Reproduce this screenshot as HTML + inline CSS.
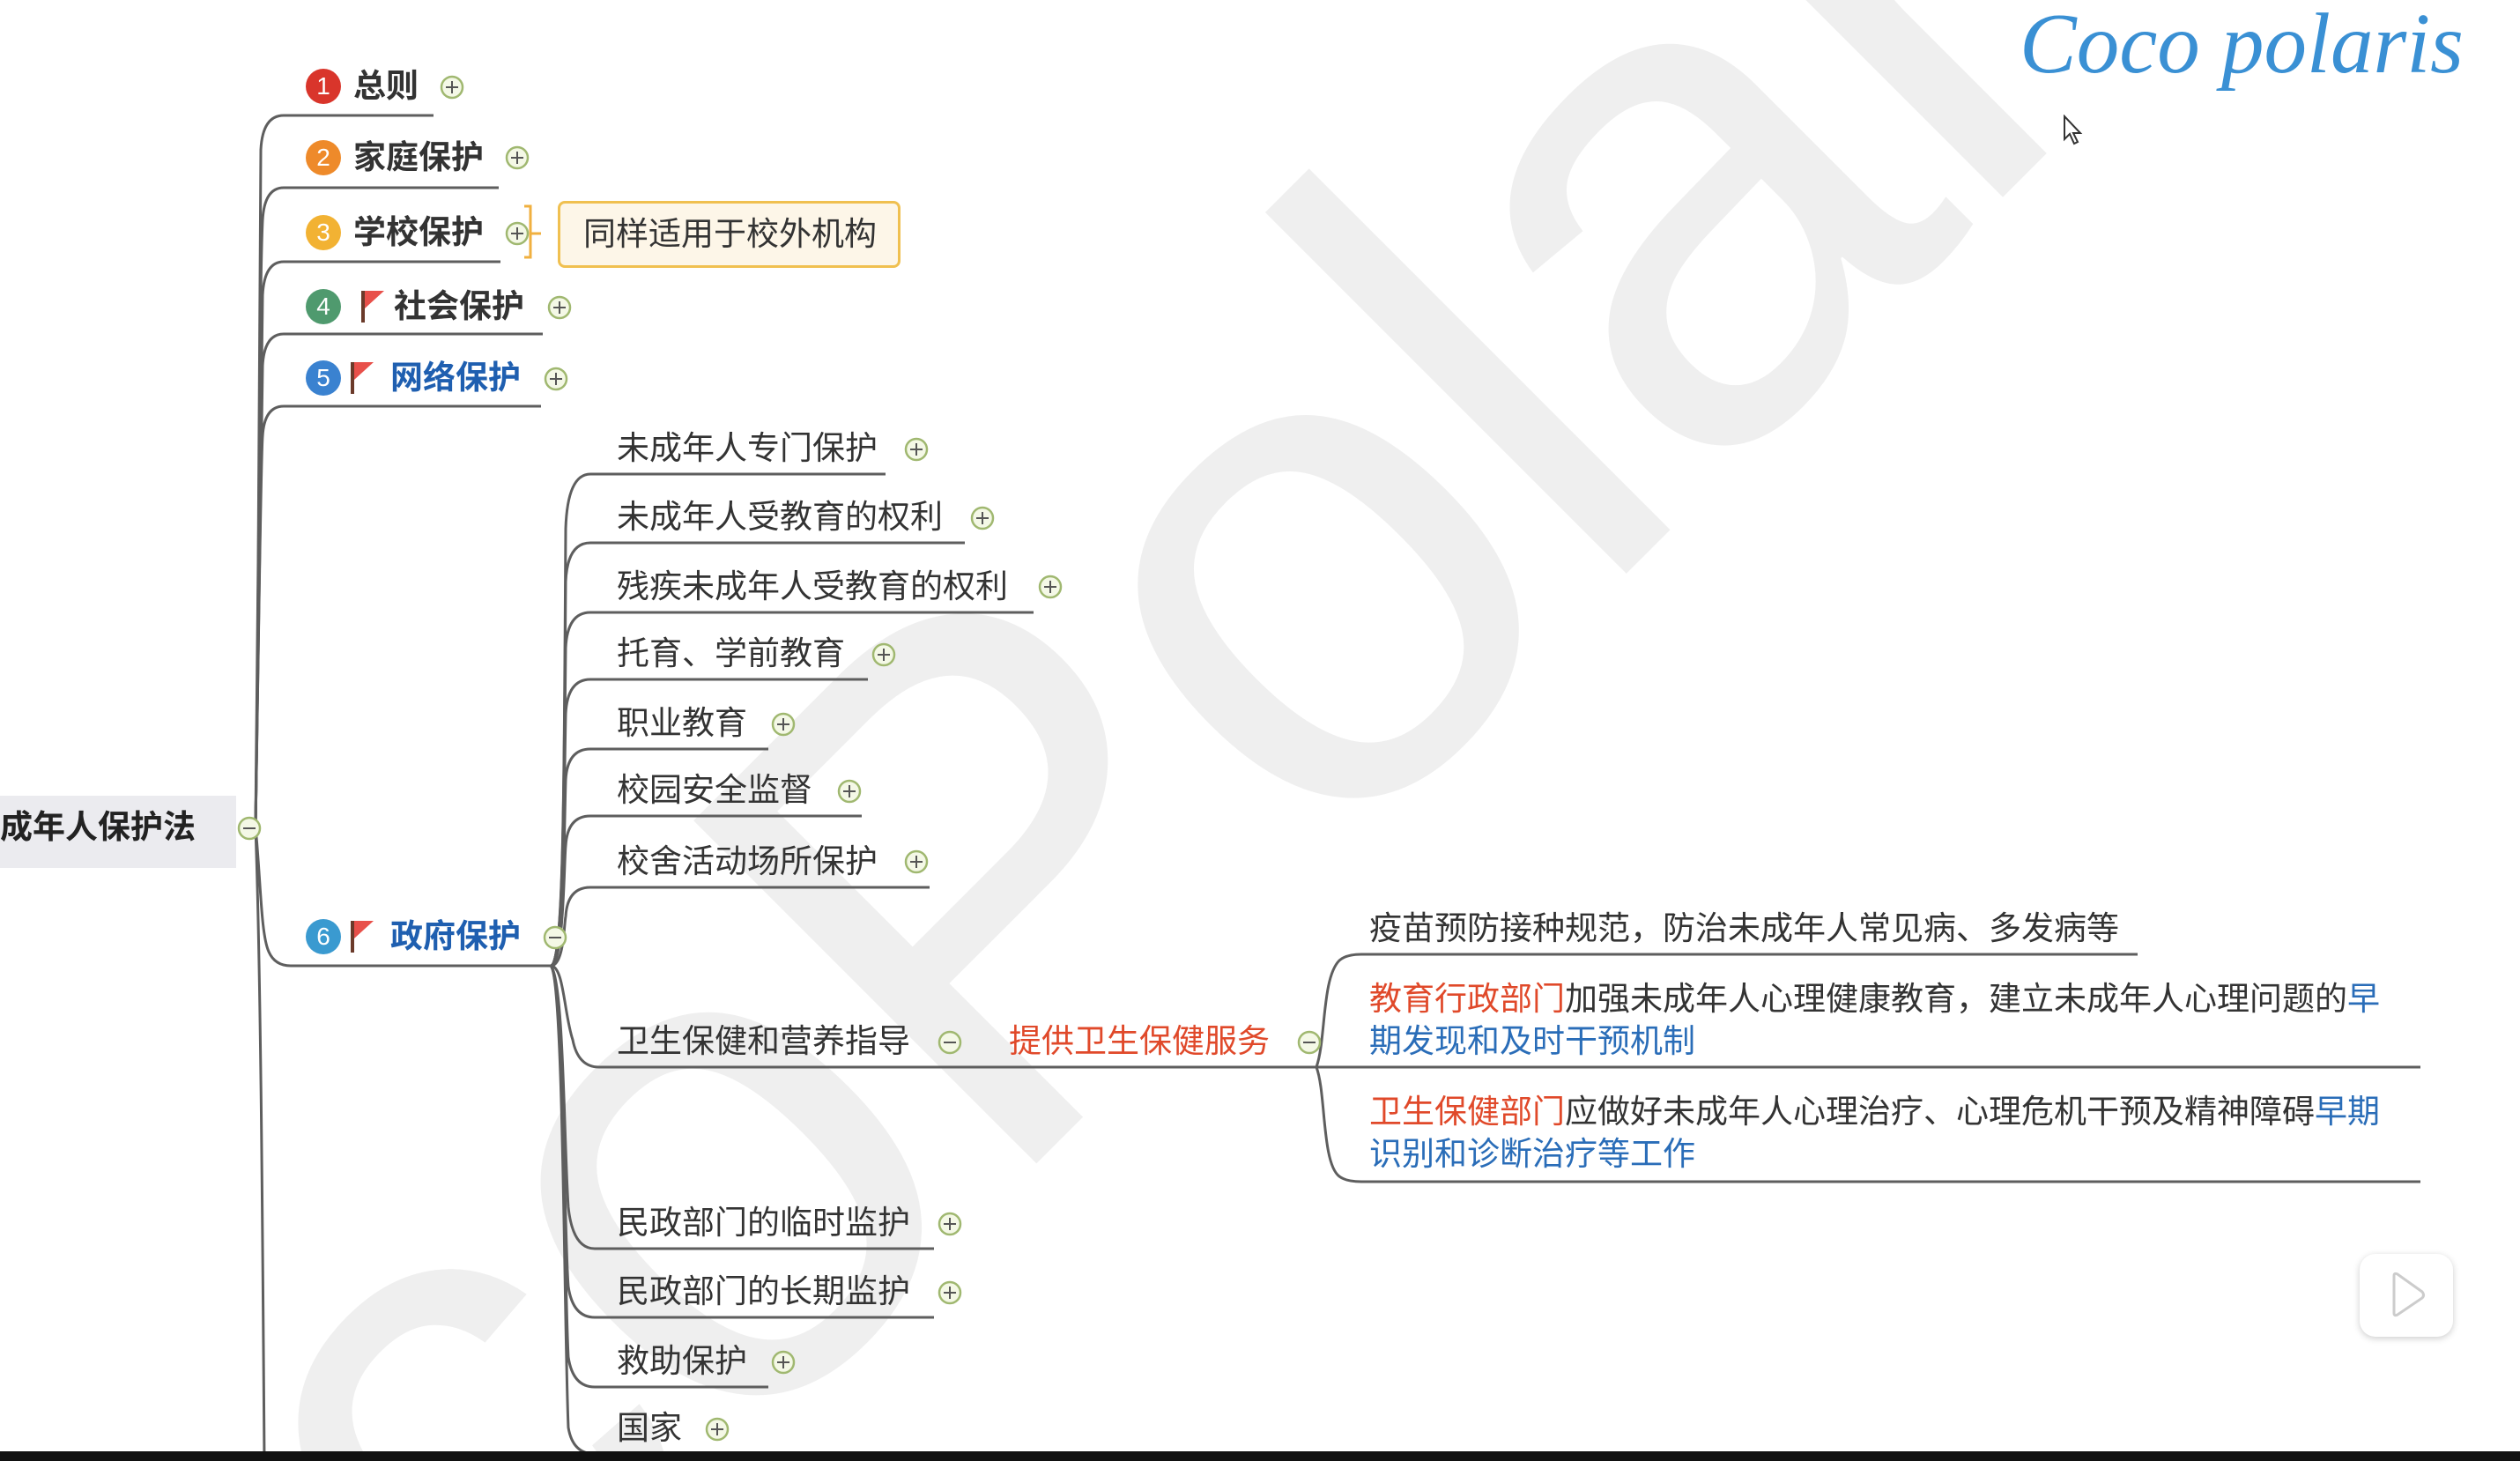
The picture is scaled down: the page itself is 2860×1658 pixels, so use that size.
<!DOCTYPE html>
<html><head><meta charset="utf-8"><style>
html,body{margin:0;padding:0;width:2860px;height:1658px;overflow:hidden;}
#wrap{position:relative;width:2860px;height:1658px;overflow:hidden;background:#fff;font-family:"Liberation Sans","Noto Sans CJK SC",sans-serif;color:#333;}
.t{position:absolute;white-space:nowrap;font-size:37px;line-height:50px;}
.b{font-weight:bold;}
.blue{color:#1f5fb0;}
.red{color:#e0492a;}
.lb{color:#2a6db8;}
.num{position:absolute;width:40px;height:40px;border-radius:50%;color:#fff;font-size:28px;line-height:40px;text-align:center;font-family:"Liberation Sans",sans-serif;}
.flag{position:absolute;width:4px;height:36px;background:#6b3a2a;}
.flag:after{content:"";position:absolute;left:4px;top:0;border-left:22px solid #e8504a;border-bottom:20px solid transparent;}
</style></head><body><div id="wrap">
<svg width="2860" height="1658" style="position:absolute;left:0;top:0">
<text x="1285" y="1097" text-anchor="middle" transform="rotate(-45 1285 820)" font-family="Liberation Sans, sans-serif" font-size="800" letter-spacing="-10" fill="#efefef">coPolar</text>
</svg>

<svg width="2860" height="1658" style="position:absolute;left:0;top:0" fill="none" stroke="#5e5e5e" stroke-width="3">
<path d="M290 939 C294 700 294 300 296 170 Q298 131 322 131"/>
<path d="M290 939 C294 700 294 330 298 250 Q300 213 322 213"/>
<path d="M290 939 C294 700 296 400 298 335 Q300 297 322 297"/>
<path d="M290 939 C294 700 296 450 298 415 Q300 379 322 379"/>
<path d="M290 939 C294 700 296 520 298 495 Q300 461 322 461"/>
<path d="M290 939 C296 1000 296 1060 305 1080 Q312 1096 330 1096"/>
<path d="M290 939 C296 1100 298 1400 300 1658"/>
<path d="M322 131 H492"/><path d="M322 213 H566"/><path d="M322 297 H568"/><path d="M322 379 H616"/><path d="M322 461 H614"/><path d="M330 1096 H625"/>
<g>
<path d="M625 1096 C640 1096 640 900 642 600 Q644 538 670 538"/>
<path d="M625 1096 C640 1096 640 900 642 660 Q644 616 670 616"/>
<path d="M625 1096 C640 1096 640 900 642 735 Q644 695 670 695"/>
<path d="M625 1096 C640 1096 640 900 642 810 Q644 771 670 771"/>
<path d="M625 1096 C640 1096 640 950 642 885 Q644 850 670 850"/>
<path d="M625 1096 C640 1096 640 980 642 960 Q644 926 670 926"/>
<path d="M625 1096 C640 1096 640 1050 642 1040 Q644 1007 670 1007"/>
<path d="M625 1096 C640 1096 640 1150 650 1180 Q656 1211 680 1211"/>
<path d="M625 1096 C640 1110 640 1300 645 1370 Q650 1417 675 1417"/>
<path d="M625 1096 C640 1110 640 1400 645 1460 Q650 1495 675 1495"/>
<path d="M625 1096 C640 1110 640 1450 645 1540 Q650 1574 675 1574"/>
<path d="M625 1096 C640 1110 640 1500 645 1620 Q650 1650 675 1650"/>
</g>
<path d="M670 538 H1005"/><path d="M670 616 H1095"/><path d="M670 695 H1173"/><path d="M670 771 H985"/><path d="M670 850 H872"/><path d="M670 926 H978"/><path d="M670 1007 H1055"/>
<path d="M680 1211 H2747"/>
<path d="M675 1417 H1060"/><path d="M675 1495 H1060"/><path d="M675 1574 H872"/><path d="M675 1650 H790"/>
<path d="M1494 1211 C1505 1180 1500 1110 1520 1090 Q1528 1083 1545 1083 H2426"/>
<path d="M1494 1211 C1505 1240 1500 1320 1520 1335 Q1528 1341 1545 1341 H2747"/>
<path d="M595 234 H602 V292 H595" stroke="#f0b040"/>
<path d="M602 265 H614" stroke="#f0b040"/>
</svg>

<div style="position:absolute;left:0;top:903px;width:268px;height:82px;background:#ebebef;"></div>
<div class="t b" style="left:0;top:914px;font-size:37px;color:#222;">成年人保护法</div>

<div class="num" style="left:347px;top:78px;background:#d9352b;">1</div>
<div class="t b" style="left:401px;top:73px;">总则</div>
<div class="num" style="left:347px;top:159px;background:#ee8a2a;">2</div>
<div class="t b" style="left:401px;top:154px;">家庭保护</div>
<div class="num" style="left:347px;top:244px;background:#f2b233;">3</div>
<div class="t b" style="left:401px;top:239px;">学校保护</div>
<div style="position:absolute;left:633px;top:228px;width:383px;height:70px;border:3px solid #f0c050;border-radius:8px;background:#fdf6e8;"></div>
<div class="t" style="left:662px;top:241px;">同样适用于校外机构</div>
<div class="num" style="left:347px;top:328px;background:#4f9a6e;">4</div>
<div class="flag" style="left:410px;top:330px;"></div>
<div class="t b" style="left:447px;top:323px;">社会保护</div>
<div class="num" style="left:347px;top:409px;background:#3a82d0;">5</div>
<div class="flag" style="left:398px;top:411px;"></div>
<div class="t b blue" style="left:443px;top:404px;">网络保护</div>
<div class="num" style="left:347px;top:1043px;background:#3a9ad0;">6</div>
<div class="flag" style="left:398px;top:1045px;"></div>
<div class="t b blue" style="left:443px;top:1038px;">政府保护</div>

<div class="t" style="left:700px;top:484px;">未成年人专门保护</div>
<div class="t" style="left:700px;top:562px;">未成年人受教育的权利</div>
<div class="t" style="left:700px;top:641px;">残疾未成年人受教育的权利</div>
<div class="t" style="left:700px;top:717px;">托育、学前教育</div>
<div class="t" style="left:700px;top:796px;">职业教育</div>
<div class="t" style="left:700px;top:872px;">校园安全监督</div>
<div class="t" style="left:700px;top:953px;">校舍活动场所保护</div>
<div class="t" style="left:700px;top:1157px;">卫生保健和营养指导</div>
<div class="t red" style="left:1145px;top:1157px;">提供卫生保健服务</div>
<div class="t" style="left:700px;top:1363px;">民政部门的临时监护</div>
<div class="t" style="left:700px;top:1441px;">民政部门的长期监护</div>
<div class="t" style="left:700px;top:1520px;">救助保护</div>
<div class="t" style="left:700px;top:1596px;">国家</div>

<div class="t" style="left:1554px;top:1029px;">疫苗预防接种规范，防治未成年人常见病、多发病等</div>
<div class="t" style="left:1554px;top:1109px;"><span class="red">教育行政部门</span>加强未成年人心理健康教育，建立未成年人心理问题的<span class="lb">早</span></div>
<div class="t lb" style="left:1554px;top:1157px;">期发现和及时干预机制</div>
<div class="t" style="left:1554px;top:1237px;"><span class="red">卫生保健部门</span>应做好未成年人心理治疗、心理危机干预及精神障碍<span class="lb">早期</span></div>
<div class="t lb" style="left:1554px;top:1285px;">识别和诊断治疗等工作</div>

<svg width="2860" height="1658" style="position:absolute;left:0;top:0">
<defs>
<g id="p"><circle r="12" fill="#f4f8e6" stroke="#a0b870" stroke-width="2.5"/><path d="M-7 0H7M0 -7V7" stroke="#555" stroke-width="2"/></g>
<g id="m"><circle r="12" fill="#f4f8e6" stroke="#a0b870" stroke-width="2.5"/><path d="M-7 0H7" stroke="#555" stroke-width="2"/></g>
</defs>
<use href="#p" x="513" y="99"/><use href="#p" x="587" y="179"/><use href="#p" x="587" y="265"/>
<use href="#p" x="635" y="349"/><use href="#p" x="631" y="430"/>
<use href="#m" x="283" y="940"/><use href="#m" x="630" y="1064"/>
<use href="#p" x="1040" y="510"/><use href="#p" x="1115" y="588"/><use href="#p" x="1192" y="666"/>
<use href="#p" x="1003" y="743"/><use href="#p" x="889" y="822"/><use href="#p" x="964" y="898"/><use href="#p" x="1040" y="978"/>
<use href="#m" x="1078" y="1183"/><use href="#m" x="1486" y="1183"/>
<use href="#p" x="1078" y="1389"/><use href="#p" x="1078" y="1467"/><use href="#p" x="889" y="1546"/><use href="#p" x="814" y="1622"/>
</svg>

<div style="position:absolute;left:2292px;top:-8px;font-family:'Liberation Serif',serif;font-style:italic;font-size:97px;line-height:115px;color:#3a90d4;white-space:nowrap;">Coco polaris</div>
<svg width="30" height="40" style="position:absolute;left:2340px;top:130px"><path d="M3 2 L3 28 L9 22 L14 33 L18 31 L13 21 L21 21 Z" fill="#fff" stroke="#333" stroke-width="2"/></svg>
<div style="position:absolute;left:2678px;top:1423px;width:106px;height:94px;border-radius:18px;background:#fff;box-shadow:0 2px 8px rgba(0,0,0,0.2);"></div>
<svg width="60" height="60" style="position:absolute;left:2705px;top:1440px"><path d="M12 8 Q12 4 16 6 L44 26 Q47 30 44 33 L16 52 Q12 54 12 50 Z" fill="#fff" stroke="#ccc" stroke-width="3"/></svg>
<div style="position:absolute;left:0;top:1647px;width:2860px;height:11px;background:#111;"></div>
</div></body></html>
